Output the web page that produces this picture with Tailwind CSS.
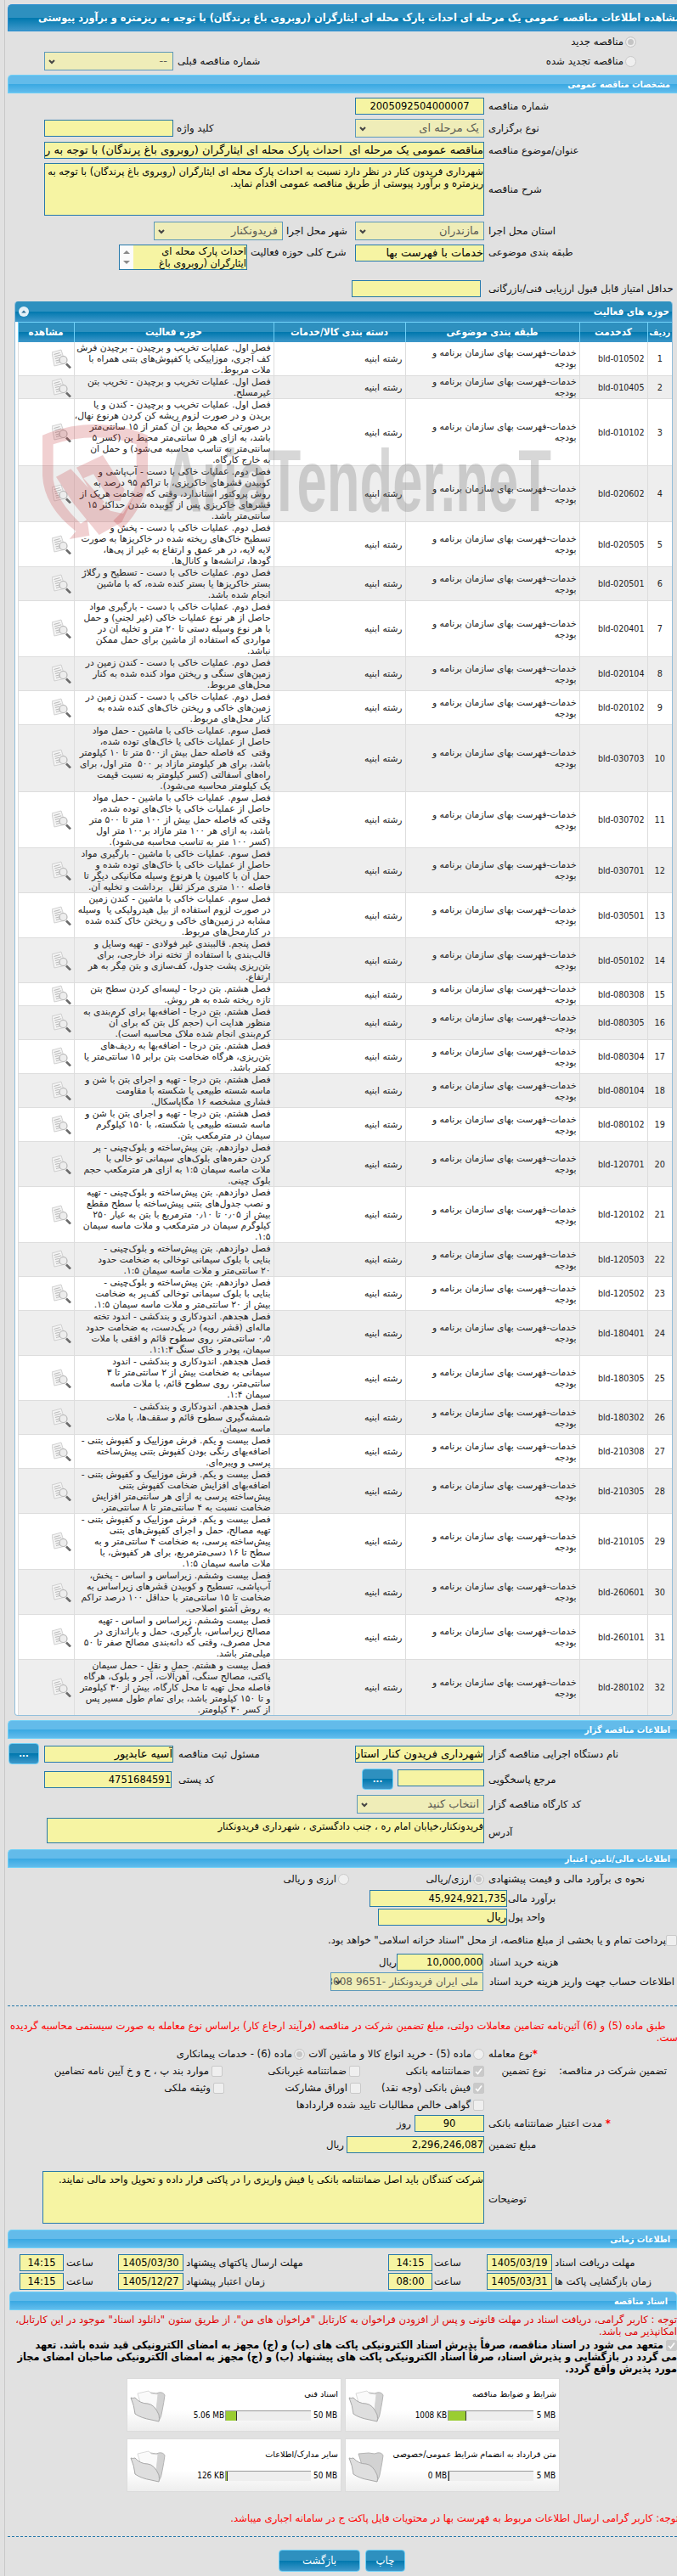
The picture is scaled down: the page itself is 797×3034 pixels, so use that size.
<!DOCTYPE html>
<html lang="fa" dir="rtl">

<head>
    <meta charset="UTF-8">
    <meta name="viewport" content="width=device-width, initial-scale=1.0">
    <title>مشاهده اطلاعات مناقصه عمومی</title>
    <script src="https://cdn.jsdelivr.net/npm/@tailwindcss/browser@4"></script>
    <style>
        body {
            font-family: Tahoma, 'DejaVu Sans', sans-serif;
        }

        .title-bar,
        .section-bar,
        .narrow {
            font-family: Tahoma, 'DejaVu Sans Condensed', 'DejaVu Sans', sans-serif;
        }

        .title-bar {
            background: linear-gradient(#2e90bf 0 50%, #0078ae 50%, #3f98ca 100%);
        }

        .section-bar {
            background: linear-gradient(#63bbea 0 50%, #38a8e2 50%, #62bcec 100%);
        }

        .field,
        .select {
            background: #f6f4a3;
            border: 1px solid #2779aa;
            color: #000;
            font-size: 13px;
            white-space: nowrap;
            overflow: hidden;
            flex-shrink: 0;
        }

        .field.narrow {
            font-size: 12.8px;
        }

        .field.area {
            font-size: 11.5px;
        }

        .select {
            background: #efedb8;
            border-color: #5c98bb;
            color: #5c5c55;
            position: relative;
        }

        .radio,
        .check {
            width: 13px;
            height: 13px;
            border: 1px solid #c9c9c9;
            background: #efefef;
            border-radius: 50%;
            flex-shrink: 0;
        }

        .check {
            border-radius: 2px;
        }

        .radio.on {
            background: #c4c4c4;
            box-shadow: inset 0 0 0 2px #eee;
        }

        .check.on {
            background: #c9c9c9;
        }
    </style>
</head>

<body class="bg-[#e1e1e1] text-[#111] text-[11.7px] leading-[14px]">
    <div class="w-[797px] h-[3034px] overflow-hidden whitespace-nowrap flex">
        <div class="w-[792px] flex flex-col border-l border-[#c8c8c8] pl-[3px] shrink-0">

            <div class="title-bar mt-[5px] h-8 shrink-0 border border-r-0 border-[#2a8dd0] rounded-tl-[5px] flex items-center justify-end pl-[35px] text-white font-bold text-[12.6px]">
                <span class="shrink-0">مشاهده اطلاعات مناقصه عمومی یک مرحله ای احداث پارک محله ای ایثارگران (روبروی باغ پرندگان) با توجه به ریزمتره و برآورد پیوستی</span>
            </div>

            <div class="h-6 shrink-0 flex items-center pr-12 gap-0.5">
                <span class="radio on"></span><span>مناقصه جدید</span>
            </div>
            <div class="h-[22px] shrink-0 flex items-center pr-12">
                <span class="radio"></span><span class="w-[527px] flex justify-between pr-0.5"><span>مناقصه تجدید شده</span><span>شماره مناقصه قبلی</span></span>
                <div class="select ms-[5px] w-[152px] h-[22px] px-1.5 leading-5">--<svg class="absolute left-1 top-2 w-2 h-1.5" viewBox="0 0 8 6" fill="none" stroke="#444" stroke-width="2"><path d="M1 1l3 3 3-3" /></svg></div>
            </div>

            <div class="section-bar mt-[5px] h-[22px] shrink-0 border border-r-0 border-[#6fd0f7] rounded-tl-[5px] flex items-center pr-2 text-white font-bold text-[10.6px]">مشخصات مناقصه عمومی</div>

            <div class="mt-[5px] h-5 shrink-0 flex items-center">
                <span class="w-[222px] text-left">شماره مناقصه</span>
                <div class="field narrow ms-[5px] w-[152px] h-5 leading-[18px] text-center">2005092504000007</div>
            </div>
            <div class="mt-[5px] h-[22px] shrink-0 flex items-center">
                <span class="w-[222px] text-left">نوع برگزاری</span>
                <div class="select ms-[5px] w-[152px] h-[22px] px-[5px] leading-5">یک مرحله ای<svg class="absolute left-1 top-2 w-2 h-1.5" viewBox="0 0 8 6" fill="none" stroke="#444" stroke-width="2"><path d="M1 1l3 3 3-3" /></svg></div>
                <span class="w-[210px] text-left">کلید واژه</span>
                <div class="field ms-1 w-[152px] h-5"></div>
            </div>
            <div class="mt-[5px] h-5 shrink-0 flex items-center">
                <span class="w-[222px] text-left">عنوان/موضوع مناقصه</span>
                <div class="field ms-[5px] w-[518px] h-5 leading-[18px]"><span class="whitespace-pre">مناقصه عمومی یک مرحله ای  احداث پارک محله ای ایثارگران (روبروی باغ پرندگان) با توجه به ریزمتره</span></div>
            </div>
            <div class="mt-[5px] h-[62px] shrink-0 flex items-center">
                <span class="w-[222px] text-left">شرح مناقصه</span>
                <div class="field area ms-[5px] w-[518px] h-[62px] pt-0.5">شهرداری فریدون کنار در نظر دارد نسبت به احداث پارک محله ای ایثارگران (روبروی باغ پرندگان) با توجه به<br>ریزمتره و برآورد پیوستی از طریق مناقصه عمومی اقدام نماید.</div>
            </div>
            <div class="mt-[7px] h-[22px] shrink-0 flex items-center">
                <span class="w-[222px] text-left">استان محل اجرا</span>
                <div class="select ms-[5px] w-[152px] h-[22px] px-[5px] leading-5">مازندران<svg class="absolute left-1 top-2 w-2 h-1.5" viewBox="0 0 8 6" fill="none" stroke="#444" stroke-width="2"><path d="M1 1l3 3 3-3" /></svg></div>
                <span class="w-[81px] text-left">شهر محل اجرا</span>
                <div class="select ms-1 w-[152px] h-[22px] px-[5px] leading-5">فریدونکنار<svg class="absolute left-1 top-2 w-2 h-1.5" viewBox="0 0 8 6" fill="none" stroke="#444" stroke-width="2"><path d="M1 1l3 3 3-3" /></svg></div>
            </div>
            <div class="mt-[5px] h-[30px] shrink-0 flex items-start">
                <span class="w-[222px] text-left pt-0.5">طبقه بندی موضوعی</span>
                <div class="field ms-[5px] w-[152px] h-5 leading-[18px]">خدمات با فهرست بها</div>
                <span class="w-[123px] text-left pt-0.5">شرح کلی حوزه فعالیت</span>
                <div class="field area ms-1 w-[151px] h-[30px] flex justify-between leading-[14px]">
                    <span>احداث پارک محله ای<br>ایثارگران (روبروی باغ</span>
                    <span class="w-4 bg-[#fbfbfb] flex flex-col items-center justify-between py-1.5"><svg class="w-2 h-1" viewBox="0 0 8 4" fill="#8a8a8a"><path d="M0 4l4-4 4 4z" /></svg><svg class="w-2 h-1" viewBox="0 0 8 4" fill="#8a8a8a"><path d="M0 0l4 4 4-4z" /></svg></span>
                </div>
            </div>
            <div class="mt-3 h-5 shrink-0 flex items-center">
                <span class="w-[222px] text-left">حداقل امتیاز قابل قبول ارزیابی فنی/بازرگانی</span>
                <div class="field ms-[9px] w-[152px] h-5"></div>
            </div>

            <div class="relative mt-[5px] mr-[5px] ml-2 h-[1666px] shrink-0 border border-t-0 border-[#93bfdb] rounded-[4px] bg-white overflow-hidden">
                <div class="title-bar h-6 flex items-center justify-between pr-[3px] pl-1 text-white font-bold text-[11.5px]">
                    <span>حوزه های فعالیت</span>
                    <svg class="w-3 h-3" viewBox="0 0 12 12"><circle cx="6" cy="6" r="6" fill="#e4f1f8" /><path d="M3.2 7.5L6 4.4l2.8 3.1z" fill="#2b6d94" /></svg>
                </div>
                <table class="table-fixed w-[770px] border-collapse">
                    <thead>
                        <tr class="title-bar h-[23px] text-white text-[11.8px] font-bold">
                            <th class="w-[29px] border-l border-t border-[#6fd0f7] p-0 text-[10.5px]">ردیف</th>
                            <th class="w-[80px] border-l border-t border-[#6fd0f7] p-0">کدخدمت</th>
                            <th class="w-[205px] border-l border-t border-[#6fd0f7] p-0">طبقه بندی موضوعی</th>
                            <th class="w-[155px] border-l border-t border-[#6fd0f7] p-0">دسته بندی کالا/خدمات</th>
                            <th class="w-[235px] border-l border-t border-[#6fd0f7] p-0">حوزه فعالیت</th>
                            <th class="w-[66px] border-l border-t border-[#6fd0f7] p-0">مشاهده</th>
                        </tr>
                    </thead>
                    <tbody id="activityList" class="text-[10.7px] leading-[13px] text-[#222]"></tbody>
                </table>

                <svg class="absolute left-3 top-[125px] w-[330px] h-[170px] pointer-events-none" viewBox="0 0 990 510" fill="#c4393f" fill-opacity=".24">
                    <path d="M60 98Q245 20 432 98V230Q430 340 340 430L310 400Q388 330 392 240V130Q245 82 98 130V255Q110 330 195 410L218 395 226 452 155 465 178 437Q65 350 60 240Z" />
                    <path d="M108 245L160 217 265 330 300 365 345 375 385 310 340 405 260 450 170 340ZM180 212L273 168 350 290 335 330 300 330 240 235 205 250 280 335 255 340Z" />
                </svg>
                <svg class="absolute left-[171px] top-[160px] w-[462px] h-[95px] pointer-events-none" viewBox="0 0 462 95">
                    <text x="3" y="87" style="direction:ltr" text-anchor="start" font-family="Liberation Sans Narrow, Liberation Sans" font-weight="bold" font-size="104" textLength="457" lengthAdjust="spacingAndGlyphs" fill="#6f6f6f" fill-opacity=".28">AriaTender.neT</text>
                </svg>
            </div>

            <div class="section-bar mt-[5px] h-[22px] shrink-0 border border-r-0 border-[#6fd0f7] rounded-tl-[5px] flex items-center pr-2 text-white font-bold text-[10.6px]">اطلاعات مناقصه گزار</div>

            <div class="mt-[5px] h-[25px] shrink-0 flex items-center">
                <span class="w-[222px] text-left">نام دستگاه اجرایی مناقصه گزار</span>
                <div class="field ms-[5px] w-[152px] h-5 leading-[18px]">شهرداری فریدون کنار استان مازندران</div>
                <span class="w-[208px] text-left">مسئول ثبت مناقصه</span>
                <div class="field ms-[6px] w-[152px] h-5 leading-[18px]">آسیه عابدپور</div>
                <span class="title-bar ms-1.5 w-9 h-[25px] border border-[#6fd0f7] rounded-[4px] text-white font-bold text-center leading-6 text-[11px]">...</span>
            </div>
            <div class="mt-[5px] h-[25px] shrink-0 flex items-center">
                <span class="w-[222px] text-left">مرجع پاسخگویی</span>
                <div class="field ms-[5px] w-[102px] h-5 -mt-1"></div>
                <span class="title-bar ms-[5px] w-[37px] h-[25px] border border-[#6fd0f7] rounded-[4px] text-white font-bold text-center leading-6 text-[11px]">...</span>
                <span class="w-[216px] text-left">کد پستی</span>
                <div class="field narrow ms-[8px] w-[150px] h-5 leading-[18px]">4751684591</div>
            </div>
            <div class="mt-[6px] h-[22px] shrink-0 flex items-center">
                <span class="w-[222px] text-left">کد کارگاه مناقصه گزار</span>
                <div class="select ms-[5px] w-[150px] h-[22px] px-[5px] leading-5">انتخاب کنید<svg class="absolute left-1 top-2 w-2 h-1.5" viewBox="0 0 8 6" fill="none" stroke="#444" stroke-width="2"><path d="M1 1l3 3 3-3" /></svg></div>
            </div>
            <div class="mt-[5px] h-[30px] shrink-0 flex items-center">
                <span class="w-[222px] text-left pt-1">آدرس</span>
                <div class="field area ms-[5px] w-[515px] h-[30px] pt-0.5">فریدونکنار،خیابان امام ره ، جنب دادگستری ، شهرداری فریدونکنار</div>
            </div>

            <div class="section-bar mt-[7px] h-[22px] shrink-0 border border-r-0 border-[#6fd0f7] rounded-tl-[5px] flex items-center pr-2 text-white font-bold text-[10.6px]">اطلاعات مالی/تامین اعتبار</div>

            <div class="mt-1 h-[18px] shrink-0 flex items-center">
                <span class="w-[222px] text-left">نحوه ی برآورد مالی و قیمت پیشنهادی</span>
                <span class="radio on ms-[5px]"></span><span class="w-[146px] pr-0.5">ارزی/ریالی</span>
                <span class="radio"></span><span class="pr-0.5">ارزی و ریالی</span>
            </div>
            <div class="mt-1 h-5 shrink-0 flex items-center">
                <span class="w-[199px] text-left">برآورد مالی</span>
                <div class="field narrow ms-px w-[162px] h-5 leading-[18px]">45,924,921,735</div>
            </div>
            <div class="mt-0.5 h-5 shrink-0 flex items-center">
                <span class="w-[199px] text-left">واحد پول</span>
                <div class="field ms-px w-[152px] h-5 leading-[18px]">ریال</div>
            </div>
            <div class="mt-2 h-[18px] shrink-0 flex items-center">
                <span class="check"></span><span>پرداخت تمام و یا بخشی از مبلغ مناقصه، از محل "اسناد خزانه اسلامی" خواهد بود.</span>
            </div>
            <div class="mt-[7px] h-5 shrink-0 flex items-center">
                <span class="w-[221px] text-left">هزینه خرید اسناد</span>
                <div class="field narrow ms-[7px] w-[102px] h-5 leading-[18px]">10,000,000</div><span>ریال</span>
            </div>
            <div class="mt-0.5 h-[22px] shrink-0 flex items-center">
                <span class="w-[221px] text-left">اطلاعات حساب جهت واریز هزینه خرید اسناد</span>
                <div class="select ms-[7px] w-[180px] h-[22px] px-[5px] leading-5"><span class="text-[12.1px]">ملی ایران فریدونکنار -9651 8008</span><svg class="absolute left-1 top-2 w-2 h-1.5" viewBox="0 0 8 6" fill="none" stroke="#444" stroke-width="2"><path d="M1 1l3 3 3-3" /></svg></div>
            </div>

            <div class="mt-[17px] shrink-0 border-t border-dashed border-[#2779aa]"></div>

            <div class="mt-4 h-7 shrink-0 text-[#f00]">
                <p class="w-[794px] flex justify-end pl-[9px]"><span class="shrink-0">طبق ماده (5) و (6) آئین‌نامه تضامین معاملات دولتی، مبلغ تضمین شرکت در مناقصه (فرآیند ارجاع کار) براساس نوع معامله به صورت سیستمی محاسبه گردیده</span></p>
                <p class="-mr-1">است.</p>
            </div>

            <div class="mt-0.5 h-5 shrink-0 flex items-center">
                <span class="w-[222px] text-left"><b class="text-[#f00]">*</b>نوع معامله</span>
                <span class="radio ms-[5px]"></span><span class="w-[198px] pr-0.5">ماده (5) - خرید انواع کالا و ماشین آلات</span>
                <span class="radio on"></span><span class="pr-0.5">ماده (6) - خدمات پیمانکاری</span>
            </div>
            <div class="h-5 shrink-0 flex items-center">
                <span class="w-[142px] pr-3">تضمین شرکت در مناقصه:</span><span class="w-[80px] pr-3">نوع تضمین</span>
                <span class="check on ms-[5px]"><svg viewBox="0 0 11 11" fill="none" stroke="#fff" stroke-width="1.6"><path d="M2 6l2.5 2.5L9 2.5" /></svg></span><span class="w-[133px] pr-[3px]">ضمانتنامه بانکی</span>
                <span class="check"></span><span class="w-[149px] pr-[3px]">ضمانتنامه غیربانکی</span>
                <span class="check"></span><span class="pr-[3px]">موارد بند پ ، ح و خ آیین نامه تضامین</span>
            </div>
            <div class="h-5 shrink-0 flex items-center">
                <span class="check on ms-[227px]"><svg viewBox="0 0 11 11" fill="none" stroke="#fff" stroke-width="1.6"><path d="M2 6l2.5 2.5L9 2.5" /></svg></span><span class="w-[132px] pr-[3px]">فیش بانکی (وجه نقد)</span>
                <span class="check"></span><span class="w-[148px] pr-[3px]">اوراق مشارکت</span>
                <span class="check"></span><span class="pr-[3px]">وثیقه ملکی</span>
            </div>
            <div class="h-5 shrink-0 flex items-center">
                <span class="check ms-[227px]"></span><span class="pr-[3px]">گواهی خالص مطالبات تایید شده قراردادها</span>
            </div>
            <div class="mt-0.5 h-5 shrink-0 flex items-center">
                <span class="w-[222px] text-left"><b class="text-[#f00]">*</b> مدت اعتبار ضمانتنامه بانکی</span>
                <div class="field narrow ms-[5px] me-1 w-[82px] h-5 leading-[18px] text-center">90</div><span>روز</span>
            </div>
            <div class="mt-[5px] h-5 shrink-0 flex items-center">
                <span class="w-[222px] text-left">مبلغ تضمین</span>
                <div class="field narrow ms-[5px] me-[3px] w-[162px] h-5 leading-[18px]">2,296,246,087</div><span>ریال</span>
            </div>
            <div class="mt-[21px] h-[62px] shrink-0 flex items-center">
                <span class="w-[222px] text-left pt-1">توضیحات</span>
                <div class="field area ms-[5px] w-[520px] h-[62px] pt-0.5">شرکت کنندگان باید اصل ضمانتنامه بانکی یا فیش واریزی را در پاکتی قرار داده و تحویل واحد مالی نمایند.</div>
            </div>

            <div class="section-bar mt-[7px] h-[22px] shrink-0 border border-r-0 border-[#6fd0f7] rounded-tl-[5px] flex items-center pr-2 text-white font-bold text-[10.6px]">اطلاعات زمانی</div>

            <div class="mt-[7px] h-5 shrink-0 flex items-center">
                <span class="w-[144px] text-left">مهلت دریافت اسناد</span>
                <div class="field narrow ms-[3px] w-[77px] h-5 leading-[18px] text-center">1405/03/19</div>
                <span class="w-[62px] text-left">ساعت</span>
                <div class="field narrow ms-0.5 w-[52px] h-5 leading-[18px] text-center">14:15</div>
                <span class="w-[238px] text-left">مهلت ارسال پاکتهای پیشنهاد</span>
                <div class="field narrow ms-[3px] w-[77px] h-5 leading-[18px] text-center">1405/03/30</div>
                <span class="w-[61px] text-left">ساعت</span>
                <div class="field narrow ms-[3px] w-[52px] h-5 leading-[18px] text-center">14:15</div>
            </div>
            <div class="mt-0.5 h-5 shrink-0 flex items-center">
                <span class="w-[144px] text-left">زمان بازگشایی پاکت ها</span>
                <div class="field narrow ms-[3px] w-[77px] h-5 leading-[18px] text-center">1405/03/31</div>
                <span class="w-[62px] text-left">ساعت</span>
                <div class="field narrow ms-0.5 w-[52px] h-5 leading-[18px] text-center">08:00</div>
                <span class="w-[238px] text-left">زمان اعتبار پیشنهاد</span>
                <div class="field narrow ms-[3px] w-[77px] h-5 leading-[18px] text-center">1405/12/27</div>
                <span class="w-[61px] text-left">ساعت</span>
                <div class="field narrow ms-[3px] w-[52px] h-5 leading-[18px] text-center">14:15</div>
            </div>

            <div class="section-bar mt-0.5 ml-0.5 h-[22px] shrink-0 border border-[#6fd0f7] rounded-t-[5px] flex items-center pr-2.5 text-white font-bold text-[10.6px]">اسناد مناقصه</div>

            <div class="mt-1 h-[30px] shrink-0 text-[#e00000] leading-[14px]">
                <p>توجه : کاربر گرامی، دریافت اسناد در مهلت قانونی و پس از افزودن فراخوان به کارتابل "فراخوان های من"، از طریق ستون "دانلود اسناد" موجود در این کارتابل،</p>
                <p>امکانپذیر می باشد.</p>
            </div>
            <div class="narrow h-[46px] shrink-0 text-black font-bold text-[12.6px] leading-[14px]">
                <p class="flex items-center gap-[3px]"><span class="check on"><svg viewBox="0 0 11 11" fill="none" stroke="#fff" stroke-width="1.6"><path d="M2 6l2.5 2.5L9 2.5" /></svg></span>متعهد می شود در اسناد مناقصه، صرفاً پذیرش اسناد الکترونیکی پاکت های (ب) و (ج) مجهز به امضای الکترونیکی قید شده باشد. تعهد</p>
                <p>می گردد در بازگشایی و پذیرش اسناد، صرفاً اسناد الکترونیکی پاکت های پیشنهاد (ب) و (ج) مجهز به امضای الکترونیکی صاحبان امضای مجاز</p>
                <p>مورد پذیرش واقع گردد.</p>
            </div>

            <div id="docList" class="mr-[138px] w-[510px] shrink-0 grid grid-cols-2 gap-x-1 gap-y-2 text-[9.7px]"></div>

            <p class="mt-[23px] h-4 shrink-0 text-[#f00] leading-4 -mr-0.5">توجه: کاربر گرامی ارسال اطلاعات مربوط به فهرست بها در محتویات فایل پاکت ج در سامانه اجباری میباشد.</p>

            <div class="mt-[13px] shrink-0 border-t border-dashed border-[#2779aa]"></div>

            <div class="mt-[15px] shrink-0 flex gap-1.5 pr-[320px]">
                <button class="title-bar w-[47px] h-[26px] border border-[#6fd0f7] rounded-[4px] text-white text-[13px]">چاپ</button>
                <button class="title-bar w-[96px] h-[26px] border border-[#6fd0f7] rounded-[4px] text-white text-[13px]">بازگشت</button>
            </div>
        </div>
    </div>

    <script>
        // code | activity, lines separated with #
        const rawActivities = `
010502|فصل اول. عملیات تخریب و برچیدن - برچیدن فرش#کف آجری، موزاییکی یا کفپوش‌های بتنی همراه با#ملات مربوط.
010405|فصل اول. عملیات تخریب و برچیدن - تخریب بتن#غیرمسلح.
010102|فصل اول. عملیات تخریب و برچیدن - کندن و یا#بریدن و در صورت لزوم ریشه کن کردن هرنوع نهال،#در صورتی که محیط بن آن کمتر از ۱۵ سانتی‌متر#باشد، به ازای هر ۵ سانتی‌متر محیط بن (کسر ۵#سانتی‌متر به تناسب محاسبه می‌شود) و حمل آن#به خارج کارگاه.
020602|فصل دوم. عملیات خاکی با دست - آب‌پاشی و#کوبیدن قشرهای خاکریزی، با تراکم ۹۵ درصد به#روش پروکتور استاندارد، وقتی که ضخامت هریک از#قشرهای خاکریزی پس از کوبیده شدن حداکثر ۱۵#سانتی‌متر باشد.
020505|فصل دوم. عملیات خاکی با دست - پخش و#تسطیح خاک‌های ریخته شده در خاکریزها به صورت#لایه لایه، در هر عمق و ارتفاع به غیر از پی‌ها،#گودها، ترانشه‌ها و کانال‌ها.
020501|فصل دوم. عملیات خاکی با دست - تسطیح و رگلاژ#بستر خاکریزها یا بستر کنده شده، که با ماشین#انجام شده باشد.
020401|فصل دوم. عملیات خاکی با دست - بارگیری مواد#حاصل از هر نوع عملیات خاکی (غیر لجنی) و حمل#با هر نوع وسیله دستی تا ۲۰ متر و تخلیه آن در#مواردی که استفاده از ماشین برای حمل ممکن#نباشد.
020104|فصل دوم. عملیات خاکی با دست - کندن زمین در#زمین‌های سنگی و ریختن مواد کنده شده به کنار#محل‌های مربوط.
020102|فصل دوم. عملیات خاکی با دست - کندن زمین در#زمین‌های خاکی و ریختن خاک‌های کنده شده به#کنار محل‌های مربوط.
030703|فصل سوم. عملیات خاکی با ماشین - حمل مواد#حاصل از عملیات خاکی یا خاک‌های توده شده،#وقتی  که فاصله حمل بیش از۵۰۰ متر تا ۱۰ کیلومتر#باشد، برای هر کیلومتر مازاد بر ۵۰۰  متر اول، برای#راه‌های آسفالتی (کسر کیلومتر به نسبت قیمت#یک کیلومتر محاسبه می‌شود).
030702|فصل سوم. عملیات خاکی با ماشین - حمل مواد#حاصل از عملیات خاکی یا خاک‌های توده شده،#وقتی که فاصله حمل بیش از ۱۰۰ متر تا ۵۰۰ متر#باشد، به ازای هر ۱۰۰ متر مازاد بر۱۰۰ متر اول#(کسر ۱۰۰ متر به تناسب محاسبه می‌شود).
030701|فصل سوم. عملیات خاکی با ماشین - بارگیری مواد#حاصل از عملیات خاکی یا خاک‌های توده شده و#حمل آن با کامیون یا هرنوع وسیله مکانیکی دیگر تا#فاصله ۱۰۰ متری مرکز ثقل  برداشت و تخلیه آن.
030501|فصل سوم. عملیات خاکی با ماشین - کندن زمین#در صورت لزوم استفاده از بیل هیدرولیکی یا  وسیله#مشابه در زمین‌های خاکی و ریختن خاک کنده شده#در کنارمحل‌های مربوط.
050102|فصل پنجم. قالببندی غیر فولادی - تهیه وسایل و#قالب‌بندی با استفاده از تخته نراد خارجی، برای#بتن‌ریزی پشت جدول، کف‌سازی و بتن مِگر به هر#ارتفاع.
080308|فصل هشتم. بتن درجا - لیسه‌ای کردن سطح بتن#تازه ریخته شده به هر روش.
080305|فصل هشتم. بتن درجا - اضافه‌بها برای کرم‌بندی به#منظور هدایت آب (حجم کل بتن که برای آن#کرم‌بندی انجام شده ملاک محاسبه است).
080304|فصل هشتم. بتن درجا - اضافه‌بها به ردیف‌های#بتن‌ریزی، هرگاه ضخامت بتن برابر ۱۵ سانتی‌متر یا#کمتر باشد.
080104|فصل هشتم. بتن درجا - تهیه و اجرای بتن با شن و#ماسه شسته طبیعی یا شکسته با مقاومت#فشاری مشخصه ۱۶ مگاپاسکال.
080102|فصل هشتم. بتن درجا - تهیه و اجرای بتن با شن و#ماسه شسته طبیعی یا شکسته، با ۱۵۰ کیلوگرم#سیمان در مترمکعب بتن.
120701|فصل دوازدهم. بتن پیش‌ساخته و بلوک‌چینی - پر#کردن حفره‌های بلوک‌های سیمانی تو خالی با#ملات ماسه سیمان ۱:۵ به ازای هر مترمکعب حجم#بلوک چینی.
120102|فصل دوازدهم. بتن پیش‌ساخته و بلوک‌چینی - تهیه#و نصب جدول‌های بتنی پیش‌ساخته با سطح مقطع#بیش از ۰٫۰۵ تا ۰٫۱۰ مترمربع با بتن به عیار ۲۵۰#کیلوگرم سیمان در مترمکعب و ملات ماسه سیمان#۱:۵.
120503|فصل دوازدهم. بتن پیش‌ساخته و بلوک‌چینی -#بنایی با بلوک سیمانی توخالی به ضخامت حدود#۲۰ سانتی‌متر و ملات ماسه سیمان ۱:۵.
120502|فصل دوازدهم. بتن پیش‌ساخته و بلوک‌چینی -#بنایی با بلوک سیمانی توخالی کف‌پر به ضخامت#بیش از ۲۰ سانتی‌متر و ملات ماسه سیمان ۱:۵.
180401|فصل هجدهم. اندودکاری و بندکشی - اندود تخته#ماله‌ای (قشر رویه) در یک‌دست، به ضخامت حدود#۰٫۵ سانتی‌متر، روی سطوح قائم و افقی با ملات#سیمان، پودر و خاک سنگ ۱:۱:۳.
180305|فصل هجدهم. اندودکاری و بندکشی - اندود#سیمانی به ضخامت بیش از ۲ سانتی‌متر تا ۳#سانتی‌متر، روی سطوح قائم، با ملات ماسه#سیمان ۱:۴.
180302|فصل هجدهم. اندودکاری و بندکشی -#شمشه‌گیری سطوح قائم و سقف‌ها، با ملات#ماسه سیمان.
210308|فصل بیست و یکم. فرش موزاییک و کفپوش بتنی -#اضافه‌بهای رنگی بودن کفپوش بتنی پیش‌ساخته#پرسی و ویبره‌ای.
210305|فصل بیست و یکم. فرش موزاییک و کفپوش بتنی -#اضافه‌بهای افزایش ضخامت کفپوش بتنی#پیش‌ساخته پرسی به ازای هر سانتی‌متر افزایش#ضخامت نسبت به ۴ سانتی‌متر تا ۸ سانتی‌متر.
210105|فصل بیست و یکم. فرش موزاییک و کفپوش بتنی -#تهیه مصالح، حمل و اجرای کفپوش‌های بتنی#پیش‌ساخته پرسی، به ضخامت ۴ سانتی‌متر و به#سطح تا ۱۶ دسی‌مترمربع، برای هر کفپوش، با#ملات ماسه سیمان ۱:۵.
260601|فصل بیست وششم. زیراساس و اساس - پخش،#آب‌پاشی، تسطیح و کوبیدن قشرهای زیراساس به#ضخامت تا ۱۵ سانتی‌متر با حداقل ۱۰۰ درصد تراکم#به روش آشتو اصلاحی.
260101|فصل بیست وششم. زیراساس و اساس - تهیه#مصالح زیراساس، بارگیری، حمل و باراندازی در#محل مصرف، وقتی که دانه‌بندی مصالح صفر تا ۵۰#میلی‌متر باشد.
280102|فصل بیست و هشتم. حمل و نقل - حمل سیمان#پاکتی، مصالح سنگی، آهن‌آلات، آجر و بلوک، هرگاه#فاصله محل تهیه تا محل کارگاه، بیش از ۳۰ کیلومتر#و تا ۱۵۰ کیلومتر باشد، برای تمام طول مسیر پس#از کسر ۳۰ کیلومتر.
        `;

        const docs = [
            { title: 'شرایط و ضوابط مناقصه', used: '1008 KB', max: '5 MB', fill: 20, full: true },
            { title: 'اسناد فنی', used: '5.06 MB', max: '50 MB', fill: 12, full: true },
            { title: 'متن قرارداد به انضمام شرایط عمومی/خصوصی', used: '0 MB', max: '5 MB', fill: 0, full: false },
            { title: 'سایر مدارک/اطلاعات', used: '126 KB', max: '50 MB', fill: 1, full: true }
        ];

        const viewIcon = `<svg class="w-[23px] h-[23px]" viewBox="0 0 23 23">
            <path d="M0 4L11 1l5 16-13 3z" fill="#f4f4f4" stroke="#c6c6c6" stroke-width=".8"/>
            <path d="M2.500 6.500l7-2M3.200 9l8-2.200M3.800 11.500l5-1.300M4.500 14l5-1.200M5 16.500l6-1.500" stroke="#b0b0b0" stroke-width=".9"/>
            <circle cx="13.500" cy="13" r="4.500" fill="#ededed" stroke="#b5b5b5" stroke-width="1.200"/>
            <path d="M17 17.500l5 5" stroke="#6b6b6b" stroke-width="2.600"/></svg>`;

        const folderIcon = full => `<svg class="w-[42px] h-[38px]" viewBox="0 0 42 38">
            <path d="M12 4l12-1 7 1 3-1q5-1 7 3-1 8-3 18-1 8-4 12L20 30z" fill="#d2d2d2" stroke="#b4b4b4"/>
            ${full ? '<path d="M9 4l13-3 3 3 8 1-2 18-16 2z" fill="#fafafa" stroke="#d0d0d0" stroke-width=".8"/>' : ''}
            <path d="M1 9q2 1 5 0 6 7 15 7 8 1 13 13 1 5 0 8l-9-2Q13 33 6 28 5 18 1 9z" fill="#dedede" stroke="#a8a8a8"/></svg>`;

        function displayActivities() {
            const list = document.getElementById('activityList');
            rawActivities.trim().split('\n').forEach((line, index) => {
                const [code, text] = line.split('|');
                const lines = text.split('#');
                const row = list.insertRow();
                row.className = index % 2 ? 'bg-[#eeeeee]' : 'bg-white';
                row.style.height = (lines.length * 13 + 1) + 'px';
                const cell = 'border-b border-l border-[#dddddd] p-0 ';
                row.innerHTML = `
                    <td class="${cell} narrow text-center text-[10.8px]">${index + 1}</td>
                    <td class="${cell} narrow pr-[3px] text-[10.6px]"><span dir="ltr">bld-${code}</span></td>
                    <td class="${cell} pr-[3px]">خدمات-فهرست بهای سازمان برنامه و<br>بودجه</td>
                    <td class="${cell} pr-[3px]">رشته ابنیه</td>
                    <td class="${cell} pr-[3px] whitespace-pre">${lines.join('<br>')}</td>
                    <td class="${cell}"><div class="flex items-center pr-[3px]">${viewIcon}</div></td>`;
            });
        }

        function displayDocs() {
            document.getElementById('docList').innerHTML = docs.map(doc => `
                <div class="w-[253px] h-[63px] border border-[#dcdcdc] bg-linear-to-b from-white from-60% to-[#eeeeee] relative text-black">
                    <p class="pr-[3px] pt-[11px]">${doc.title}</p>
                    <div class="narrow flex items-center pr-1 mt-[11px] gap-[3px] text-[9.9px]">
                        <span class="text-right ${doc.max.length > 4 ? 'w-[28px]' : 'w-[23px]'}" dir="ltr">${doc.max}</span>
                        <div class="w-[101px] h-3 border-t border-l border-[#999] bg-[#eeeeee] flex justify-end">
                            <div class="h-full bg-[#9acd32] border-r border-[#333]" style="width:${doc.fill + 1}px"></div>
                        </div>
                        <span class="-mr-0.5" dir="ltr">${doc.used}</span>
                    </div>
                    <div class="absolute left-[3px] top-[13px]">${folderIcon(doc.full)}</div>
                </div>`).join('');
        }

        displayActivities();
        displayDocs();
    </script>
</body>

</html>
